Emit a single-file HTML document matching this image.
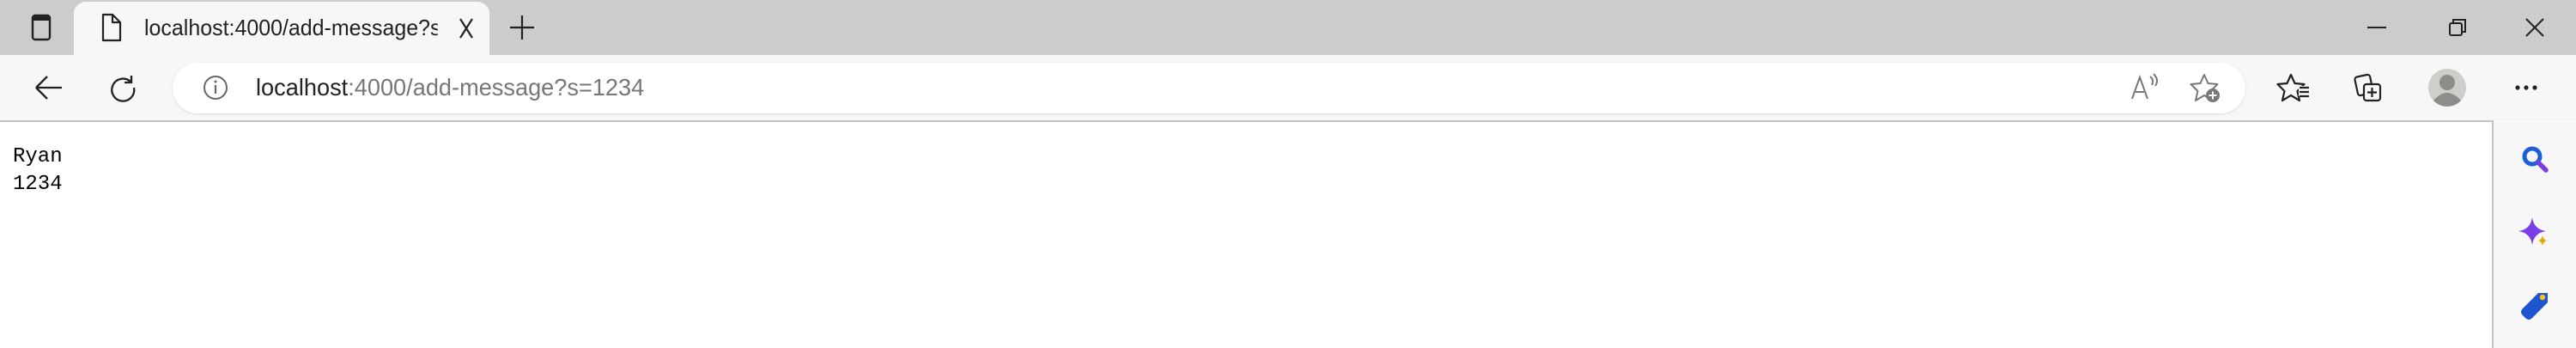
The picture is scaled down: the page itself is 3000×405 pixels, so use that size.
<!DOCTYPE html>
<html><head><style>
*{margin:0;padding:0;box-sizing:border-box}
body{width:3000px;height:405px;overflow:hidden;background:#fff;font-family:"Liberation Sans",sans-serif;position:relative}
.abs{position:absolute}
svg.i{position:absolute;overflow:visible}
</style></head><body>
<div class="abs" style="left:0;top:0;width:3000px;height:64px;background:#cccccc"></div>
<div class="abs" style="left:86px;top:2px;width:484px;height:64px;background:#f7f7f7;border-radius:14px 14px 0 0"></div>
<div class="abs" style="left:0;top:64px;width:3000px;height:77px;background:#f7f7f7"></div>
<div class="abs" style="left:0;top:140px;width:2903px;height:2px;background:#c4c4c4"></div>
<div class="abs" style="left:2902px;top:140px;width:2px;height:265px;background:#c4c4c4"></div>
<div class="abs" style="left:2904px;top:142px;width:96px;height:263px;background:#f7f7f7"></div>

<svg class="i" style="left:48px;top:32px" width="1" height="1"><rect x="-10" y="-14" width="20" height="28" rx="3" fill="none" stroke="#222" stroke-width="2.4"/><rect x="-10" y="-14" width="20" height="6" fill="#222"/></svg>
<svg class="i" style="left:130px;top:32px" width="1" height="1"><path d="M-10-15h11l9 9v21h-20z M1-15v9h9" fill="none" stroke="#222" stroke-width="2.2" stroke-linejoin="round"/></svg>
<div class="abs" style="left:168px;top:17px;font-size:26px;color:#222;white-space:nowrap;width:356px;overflow:hidden;transform:scaleX(.96);transform-origin:left">localhost:4000/add-message?s=1234</div>
<div class="abs" style="left:508px;top:10px;width:20px;height:46px;background:linear-gradient(90deg,rgba(247,247,247,0),#f7f7f7)"></div>
<svg class="i" style="left:543px;top:33px" width="1" height="1"><path d="M-7-11l14 22M7-11l-14 22" stroke="#222" stroke-width="2.2"/></svg>
<svg class="i" style="left:608px;top:32px" width="1" height="1"><path d="M-14 0h28M0-14v28" stroke="#222" stroke-width="2.2"/></svg>
<svg class="i" style="left:2768px;top:32px" width="1" height="1"><path d="M-11 0h22" stroke="#222" stroke-width="2"/></svg>
<svg class="i" style="left:2862px;top:32px" width="1" height="1"><rect x="-9" y="-5" width="14" height="14" rx="2" fill="none" stroke="#222" stroke-width="2"/><path d="M-5-6v-3h14v14h-3" fill="none" stroke="#222" stroke-width="2"/></svg>
<svg class="i" style="left:2952px;top:32px" width="1" height="1"><path d="M-10-10l20 20M10-10l-20 20" stroke="#222" stroke-width="2"/></svg>

<div class="abs" style="left:201px;top:73px;width:2414px;height:59px;background:#fff;border-radius:30px;box-shadow:0 1px 3px rgba(0,0,0,.12)"></div>
<div class="abs" style="left:298px;top:86px;font-size:28px;color:#777;white-space:nowrap;transform:scaleX(.97);transform-origin:left"><span style="color:#222">localhost</span>:4000/add-message?s=1234</div>
<svg class="i" style="left:57px;top:102px" width="1" height="1"><path d="M-15 0h30M-15 0l13-13M-15 0l13 13" fill="none" stroke="#222" stroke-width="2.3"/></svg>
<svg class="i" style="left:143px;top:102px" width="1" height="1"><path d="M9-7a13 13 0 1 0 4 7M10-14v8h-8" fill="none" stroke="#222" stroke-width="2.3"/></svg>
<svg class="i" style="left:251px;top:102px" width="1" height="1"><circle r="13" fill="none" stroke="#666" stroke-width="2"/><path d="M0-3v10" stroke="#666" stroke-width="2.2"/><circle cy="-7" r="1.5" fill="#666"/></svg>
<svg class="i" style="left:2496px;top:102px" width="1" height="1"><path d="M-13 13l9-25 9 25M-9 5h10M8-13q5 4 2 10M12-16q7 7 2 14" fill="none" stroke="#777" stroke-width="2"/></svg>
<svg class="i" style="left:2569px;top:102px" width="1" height="1"><path d="M-2-15l4.5 10 11 1-8 8 2.5 11-10-6-10 6 2.5-11-8-8 11-1z" fill="none" stroke="#777" stroke-width="2" stroke-linejoin="round"/><circle cx="8" cy="9" r="8" fill="#777"/><path d="M3.5 9h9M8 4.5v9" stroke="#fff" stroke-width="2"/></svg>
<svg class="i" style="left:2672px;top:102px" width="1" height="1"><path d="M-4-15l4.5 10 11 1-8 8 2.5 11-10-6-10 6 2.5-11-8-8 11-1z" fill="none" stroke="#222" stroke-width="2.2" stroke-linejoin="round"/><rect x="5" y="-2" width="12" height="12" fill="#f7f7f7"/><path d="M6 0h11M6 5h11M6 10h11" stroke="#222" stroke-width="2.2"/></svg>
<svg class="i" style="left:2758px;top:102px" width="1" height="1"><rect x="-14" y="-14" width="18" height="22" rx="3" fill="none" stroke="#222" stroke-width="2.2" transform="rotate(-12 -5 -3)"/><rect x="-5" y="-4" width="19" height="19" rx="3" fill="#f7f7f7" stroke="#222" stroke-width="2.2"/><path d="M-1 5.5h11M4.5 0v11" stroke="#222" stroke-width="2.2"/></svg>
<svg class="i" style="left:2850px;top:102px" width="1" height="1"><circle r="22" fill="#d0ceca"/><circle cy="-6" r="9" fill="#8f8d8b"/><path d="M-16 15q16-18 32 0a22 22 0 0 1-32 0" fill="#8f8d8b"/></svg>
<svg class="i" style="left:2942px;top:102px" width="1" height="1"><circle cx="-10" r="2.6" fill="#222"/><circle r="2.6" fill="#222"/><circle cx="10" r="2.6" fill="#222"/></svg>

<svg class="i" style="left:2952px;top:186px" width="1" height="1"><circle cx="-3" cy="-4" r="9" fill="none" stroke="#1a5fd6" stroke-width="5"/><path d="M4 3l9 9" stroke="#7a3ee0" stroke-width="5.5" stroke-linecap="round"/></svg>
<svg class="i" style="left:2952px;top:270px" width="1" height="1"><path d="M-3-17q2 14 16 16q-14 2-16 16q-2-14-16-16q14-2 16-16z" fill="#7a3ee8"/><path d="M9 4q1 5 5 6q-4 1-5 6q-1-5-5-6q4-1 5-6z" fill="#e8a800"/></svg>
<svg class="i" style="left:2952px;top:354px" width="1" height="1"><path d="M-14 5l18-18h11v11l-18 18q-4 4-8 0l-3-3q-4-4 0-8z" fill="#1d55d0"/><circle cx="9" cy="-8" r="3.2" fill="#f5c518"/></svg>

<div class="abs" style="left:15px;top:167px;font-family:'Liberation Mono',monospace;font-size:24px;line-height:32px;color:#000">Ryan<br>1234</div>
</body></html>
